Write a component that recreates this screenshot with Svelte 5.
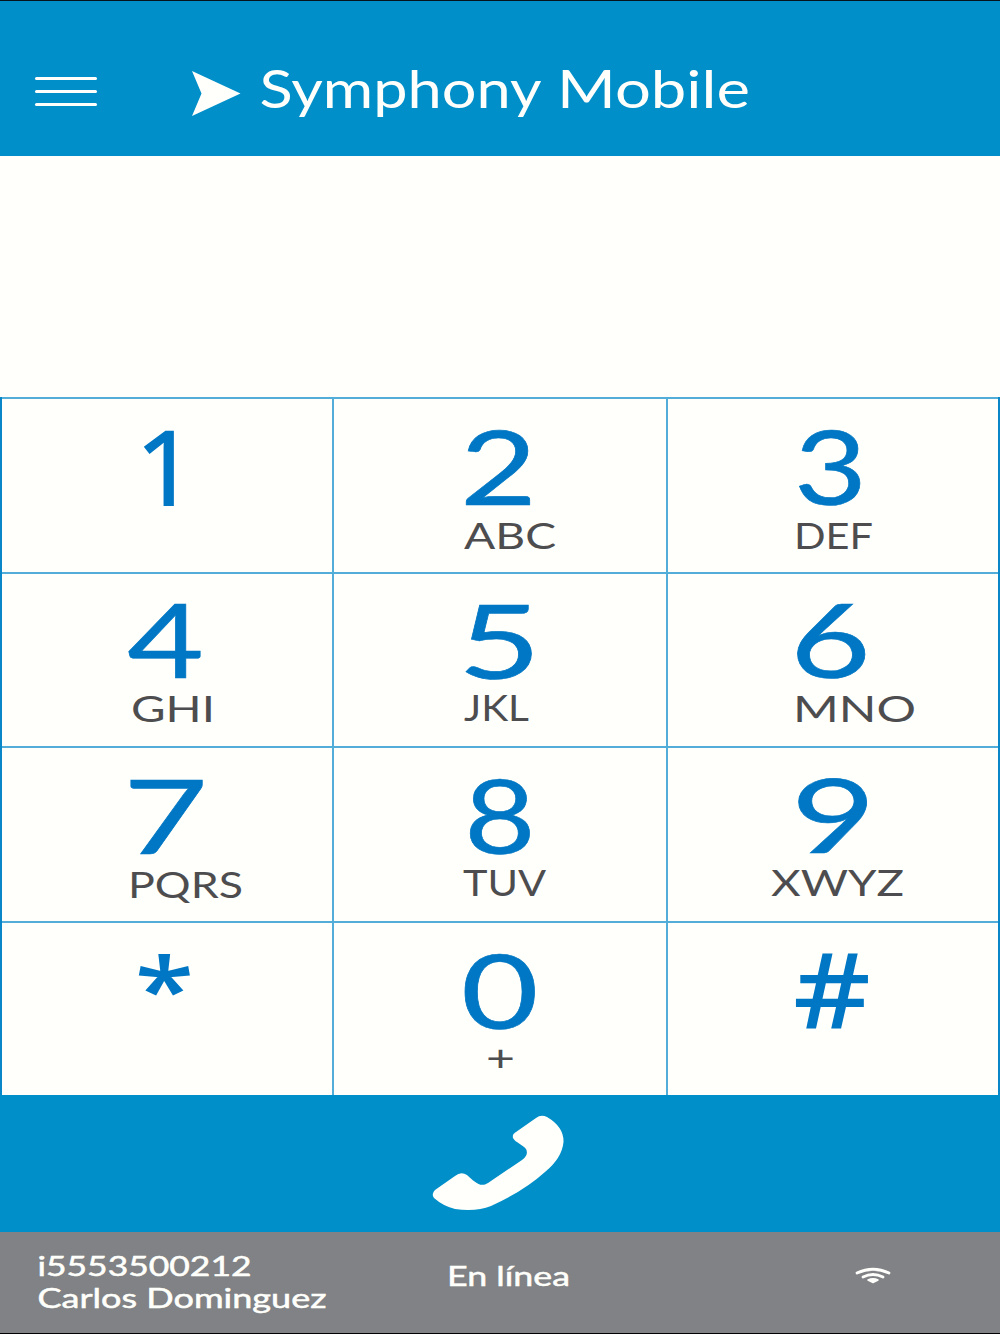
<script>
  // x / width / y are relative to each key's own cell
  const keys = [
    { digit: '1', x: 133.5, w: 61, y: 105, letters: '', style: 'plain' },
    { digit: '2', x: 126, w: 77, y: 105, letters: 'ABC', lx: 130, lw: 92, ly: 148.5 },
    { digit: '3', x: 126, w: 73, y: 105, letters: 'DEF', lx: 126, lw: 79, ly: 148.5 },
    { digit: '4', x: 125.3, w: 76.7, y: 103.5, letters: 'GHI', lx: 129, lw: 84, ly: 147.5 },
    { digit: '5', x: 124, w: 83, y: 104.5, letters: 'JKL', lx: 130, lw: 65, ly: 147 },
    { digit: '6', x: 122, w: 81, y: 104, letters: 'MNO', lx: 125, lw: 123, ly: 148 },
    { digit: '7', x: 121, w: 85, y: 105, letters: 'PQRS', lx: 126, lw: 115, ly: 148.5 },
    { digit: '8', x: 130.3, w: 71.3, y: 105, letters: 'TUV', lx: 129, lw: 83, ly: 146.5 },
    { digit: '9', x: 123, w: 84.8, y: 104, letters: 'XWYZ', lx: 103, lw: 133, ly: 146.5 },
    { digit: '*', x: 133.6, w: 58, y: 98.5, letters: '', style: 'plain star' },
    { digit: '0', x: 126.9, w: 77.5, y: 105.5, letters: '+', lx: 152, lw: 29, ly: 147.5 },
    { digit: '#', x: 126, w: 76, y: 105, letters: '', style: 'plain' },
  ];

  let number = '';

  const press = (digit) => {
    number += digit;
  };
</script>

<div class="phone">
  <header>
    <button class="menu" aria-label="Menu">
      <span></span>
      <span></span>
      <span></span>
    </button>
    <svg class="brand" width="580" height="154" viewBox="0 0 580 154">
      <path d="M12 70 L60.5 92.5 L12 115 L21.5 92.5 Z" fill="#fffffb" />
      <text x="79.500" y="106.500" textLength="282" lengthAdjust="spacingAndGlyphs">Symphony</text>
      <text x="377" y="106.500" textLength="193" lengthAdjust="spacingAndGlyphs">Mobile</text>
    </svg>
  </header>

  <div class="display">{number}</div>

  <main class="keypad">
    {#each keys as key}
      <button class="key" on:click={() => press(key.digit)}>
        <svg width="330" height="172">
          <text class="digit {key.style || ''}" x={key.x} y={key.y} textLength={key.w} lengthAdjust="spacingAndGlyphs">{key.digit}</text>
          {#if key.letters}
            <text class="letters" x={key.lx} y={key.ly} textLength={key.lw} lengthAdjust="spacingAndGlyphs">{key.letters}</text>
          {/if}
        </svg>
      </button>
    {/each}
  </main>

  <button class="call" aria-label="Llamar">
    <svg width="200" height="137" viewBox="0 0 200 137">
      <path
        d="M136 23 Q141 19 147 22 Q164 32 163.500 47 Q162 63 145 77 Q124 96 91 111 Q76 117 55 114 Q43 111 34 103 Q31 99 35 95 L55 81 Q61 76 67 80 C75 87 80 93 88 88 L122 65 Q129 60 126 54 C122 49 116 48 113 43 Q112 39 116 37 Z"
        fill="#fffffb"
      />
    </svg>
  </button>

  <footer>
    <svg class="user" width="360" height="100" viewBox="0 0 360 100">
      <text x="37.500" y="43.500" textLength="214" lengthAdjust="spacingAndGlyphs">i5553500212</text>
      <text x="37.500" y="76" textLength="289" lengthAdjust="spacingAndGlyphs">Carlos Dominguez</text>
    </svg>
    <svg class="status" width="240" height="100" viewBox="0 0 240 100">
      <text x="87" y="53.500" textLength="123" lengthAdjust="spacingAndGlyphs">En línea</text>
    </svg>
    <svg class="wifi" width="36" height="16" viewBox="0 0 36 16">
      <path d="M2 5 Q18 -2.500 34 5" />
      <path d="M8 9 Q18 4 28 9" />
      <path class="dot" d="M13 12 Q18 9.500 23 12 L18 14.500 Z" />
    </svg>
  </footer>
</div>

<style>
  :global(body) {
    margin: 0;
    background-color: #000;
  }

  button {
    display: block;
    padding: 0;
    border: none;
    border-radius: 0;
    cursor: pointer;
  }

  svg {
    display: block;
    overflow: visible;
  }

  text {
    font-family: 'Lato', sans-serif;
    fill: #fffffb;
  }

  .phone {
    box-sizing: border-box;
    width: 1000px;
    height: 1334px;
    border-top: 1px solid #061420;
    border-bottom: 1px solid #000;
    display: flex;
    flex-direction: column;
    overflow: hidden;
    background-color: #fffffb;
  }

  header {
    height: 155px;
    flex: none;
    display: flex;
    background-color: #008fc9;
  }

  .menu {
    width: 62px;
    margin: 76px 83px 0 35px;
    display: flex;
    flex-direction: column;
    justify-content: flex-start;
    gap: 10px;
    background: none;
  }

  .menu span {
    width: 62px;
    height: 3px;
    border-radius: 2px;
    background-color: #fffffb;
  }

  .brand text {
    font-size: 53px;
  }

  .display {
    height: 241px;
    flex: none;
    font: 80px 'Lato', sans-serif;
    text-align: center;
    line-height: 241px;
    color: #0077c4;
  }

  .keypad {
    display: grid;
    grid-template-columns: 330px 332px 330px;
    grid-template-rows: 173px 172px 173px 172px;
    gap: 2px;
    padding: 2px 0 0;
    border: 0 solid #0a87c8;
    border-width: 0 2px;
    background-color: #52add9;
  }

  .key {
    background-color: #fffffb;
  }

  .digit {
    font-size: 103px;
    fill: #0077c4;
    stroke: #0077c4;
    stroke-width: 0.6;
  }

  /* the 1 has no foot and the star has five arms */
  .plain {
    font-family: 'Open Sans', sans-serif;
    stroke-width: 1.8;
  }

  .star {
    font-size: 87px;
  }

  .letters {
    font-size: 36px;
    fill: #4d4d4f;
  }

  .call {
    height: 137px;
    flex: none;
    background-color: #008fc9;
  }

  .call svg {
    margin: 0 auto;
  }

  footer {
    flex: 1;
    display: flex;
    background-color: #808285;
  }

  footer text {
    font-size: 27px;
    stroke: #fffffb;
    stroke-width: 0.5;
  }

  .wifi {
    margin: 36px 0 0 255px;
    fill: none;
    stroke: #fffffb;
    stroke-width: 2.8;
    stroke-linecap: round;
  }

  .wifi .dot {
    fill: #fffffb;
    stroke-width: 1.5;
    stroke-linejoin: round;
  }
</style>
